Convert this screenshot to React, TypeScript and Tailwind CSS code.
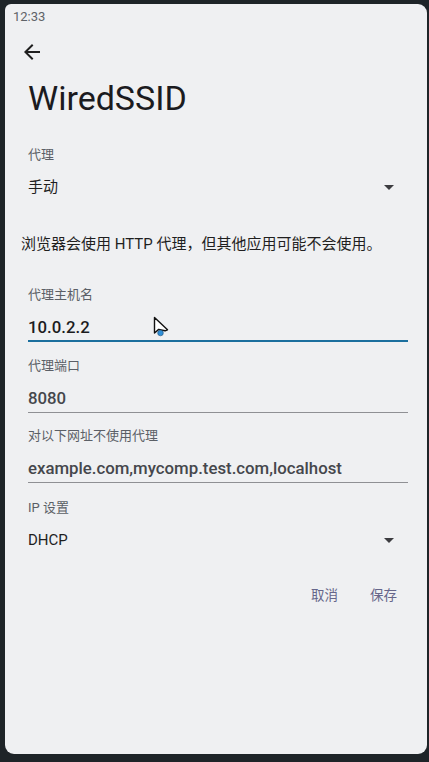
import React from "react";

const cjk = {
  fontFamily: 'Roboto, "Noto Sans CJK SC", sans-serif',
};

function Caret() {
  return (
    <svg width="10" height="5" viewBox="0 0 10 5" className="fill-[#3c3c40]">
      <path d="M0 0h10L5 5z" />
    </svg>
  );
}

function Field({
  label,
  value,
  active,
  mt,
}: {
  label: string;
  value: string;
  active?: boolean;
  mt: string;
}) {
  return (
    <div className={mt}>
      <div className="h-[20px] leading-[20px] text-[13px] text-[#5b5f66]">
        {label}
      </div>
      <div
        className={
          "mt-[5px] h-[32px] leading-[35px] text-[16.8px] font-medium " +
          (active
            ? "border-b-2 border-[#1b6f9e] text-[#1c1c1e]"
            : "border-b border-[#8f9094] text-[#45474c]")
        }
      >
        {value}
      </div>
    </div>
  );
}

export default function App() {
  return (
    <div className="h-[762px] w-[429px] bg-[#1e2428] pt-[4px] pl-[5px]" style={cjk}>
      <div className="relative w-[422px] h-[750px] bg-[#eff0f2] rounded-[9px] rounded-tl-[6px] overflow-hidden">
        {/* status bar */}
        <div className="h-[24px] leading-[25px] pl-[8px] text-[13px] text-[#5f6368]">
          12:33
        </div>

        {/* back */}
        <div className="h-[48px] flex items-center pl-[15px]">
          <svg width="24" height="24" viewBox="0 0 24 24" className="fill-[#1f1f1f]">
            <path d="M20 11H7.83l5.59-5.59L12 4l-8 8 8 8 1.41-1.41L7.83 13H20v-2z" />
          </svg>
        </div>

        <div className="h-[40px] leading-[44px] pl-[23px] text-[34px] text-[#1b1b1f]">
          WiredSSID
        </div>

        <div className="pl-[23px] pr-[19px]">
          <div className="mt-[29px] h-[20px] leading-[20px] text-[13px] text-[#5b5f66]">
            代理
          </div>
          <div className="mt-[6px] h-[32px] flex items-center justify-between pr-[14px] text-[15px] text-[#1f1f1f]">
            <span>手动</span>
            <Caret />
          </div>
        </div>

        <div className="mt-[29px] h-[24px] leading-[24px] pl-[16px] text-[15px] text-[#1f1f1f]">
          浏览器会使用 HTTP 代理，但其他应用可能不会使用。
        </div>

        <div className="pl-[23px] pr-[19px]">
          <Field mt="mt-[29px]" label="代理主机名" value="10.0.2.2" active />
          <Field mt="mt-[14px]" label="代理端口" value="8080" />
          <Field
            mt="mt-[13px]"
            label="对以下网址不使用代理"
            value="example.com,mycomp.test.com,localhost"
          />

          <div className="mt-[15px] h-[20px] leading-[20px] text-[13px] text-[#5b5f66]">
            IP 设置
          </div>
          <div className="mt-[6px] h-[32px] flex items-center justify-between pr-[14px] text-[15px] text-[#1f1f1f]">
            <span>DHCP</span>
            <Caret />
          </div>

          <div className="mt-[21px] h-[36px] flex items-center justify-end gap-[32px] pr-[11px] text-[13.5px] text-[#66668a]">
            <span>取消</span>
            <span>保存</span>
          </div>
        </div>

        {/* mouse pointer */}
        <svg
          width="18"
          height="22"
          viewBox="0 0 18 22"
          className="absolute left-[148px] top-[312px]"
        >
          <path
            d="M1.5 1.5v15.5l4.2-3.6 6.3 1.4 2.5-1z"
            fill="#fff"
            stroke="#111"
            strokeWidth="1.4"
            strokeLinejoin="round"
          />
          <circle cx="7.5" cy="17" r="2.8" fill="#2f8fd8" stroke="#1b4f7a" strokeWidth="0.6" />
        </svg>
      </div>
    </div>
  );
}
